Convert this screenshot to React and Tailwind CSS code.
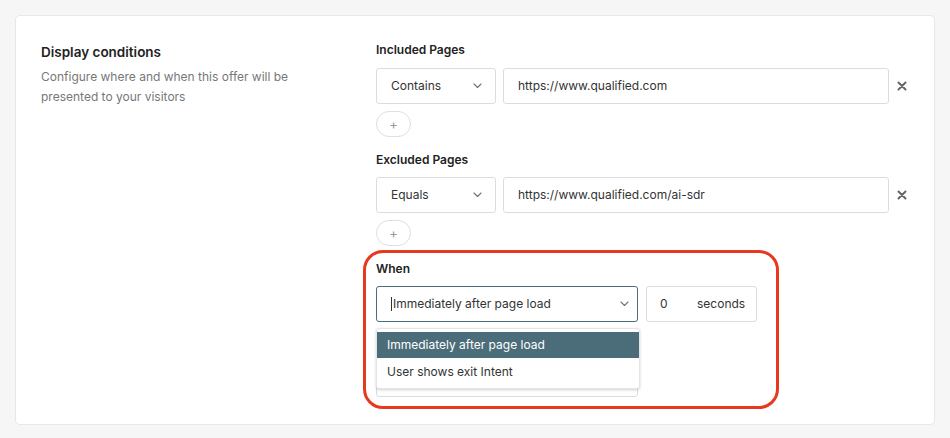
import React from 'react';

const Chevron = () => (
  <svg width="9" height="6" viewBox="0 0 9 6" fill="none" className="text-gray-500">
    <path d="M1 1l3.5 3.5L8 1" stroke="currentColor" strokeWidth="1.1" strokeLinecap="round" strokeLinejoin="round" />
  </svg>
);

const Cross = () => (
  <svg width="10" height="10" viewBox="0 0 10 10" className="text-[#666]">
    <path d="M1.5 1.5l7 7M8.5 1.5l-7 7" stroke="currentColor" strokeWidth="2" strokeLinecap="round" />
  </svg>
);

const Select = ({ value, className = '' }) => (
  <div className={`h-9 flex items-center justify-between pl-[14px] pr-[13px] bg-white border border-[#d9dde3] rounded-[3px] ${className}`}>
    <span>{value}</span>
    <Chevron />
  </div>
);

const PlusButton = () => (
  <button className="mt-[7px] w-[35px] h-[26px] rounded-full border border-[#dcdfe4] bg-white flex items-center justify-center text-[#999] text-[13px] leading-none">
    +
  </button>
);

const UrlRow = ({ op, url }) => (
  <div className="flex items-center">
    <Select value={op} className="w-[120px]" />
    <div className="ml-[7px] w-[386px] h-9 flex items-center px-[14px] bg-white border border-[#d9dde3] rounded-[3px]">
      {url}
    </div>
    <div className="w-[10px] flex justify-center ml-[8px]">
      <Cross />
    </div>
  </div>
);

export default function App() {
  return (
    <div className="min-h-[438px] bg-[#f6f6f7] p-[15px] font-['Inter',sans-serif] text-[12px] text-[#333]">
      <div className="bg-white border border-[#e5e7ea] rounded-[5px] flex pt-[26px] pb-[27px] pl-[25px]">
        <div className="w-[335px] shrink-0">
          <h2 className="text-[13.5px] leading-5 font-semibold text-[#222]">Display conditions</h2>
          <p className="mt-[5px] text-[12px] leading-5 text-[#777] w-[260px]">
            Configure where and when this offer will be presented to your visitors
          </p>
        </div>
        <div className="flex-1">
          <div className="text-[12px] leading-4 font-semibold text-[#222]">Included Pages</div>
          <div className="mt-[10px]">
            <UrlRow op="Contains" url="https://www.qualified.com" />
          </div>
          <PlusButton />
          <div className="mt-[15px] text-[12px] leading-4 font-semibold text-[#222]">Excluded Pages</div>
          <div className="mt-[9px]">
            <UrlRow op="Equals" url="https://www.qualified.com/ai-sdr" />
          </div>
          <PlusButton />

          <div className="relative">
            <div className="absolute -left-[13px] top-[4px] w-[416px] h-[159px] border-[3px] border-[#e63a1f] rounded-[20px] pointer-events-none z-20" />
            <div className="pt-[15px] text-[12px] leading-4 font-semibold text-[#222]">When</div>
            <div className="mt-[9px] flex items-center">
              <div className="w-[262px] h-9 flex items-center justify-between pl-[14px] pr-[8px] bg-white border border-[#4b6c79] rounded-[3px]">
                <span className="flex items-center">
                  <span className="w-px h-[14px] bg-[#333] mr-[1px]" />
                  Immediately after page load
                </span>
                <Chevron />
              </div>
              <div className="ml-[8px] w-[111px] h-9 flex items-center pl-[13px] bg-white border border-[#d9dde3] rounded-[3px]">
                <span className="w-[37px]">0</span>
                <span>seconds</span>
              </div>
            </div>
            <div className="relative mt-[39px] w-[262px] h-9 border border-[#d9dde3] rounded-[3px] bg-white">
              <div className="absolute -left-px -top-[34px] w-[264px] bg-white rounded-[3px] border border-[#e3e5e8] shadow-[0_1px_3px_rgba(0,0,0,0.18)] py-[3px] z-10">
                <div className="h-[26px] flex items-center px-[10px] bg-[#4b6c79] text-white">Immediately after page load</div>
                <div className="h-[27px] flex items-center px-[10px]">User shows exit Intent</div>
              </div>
            </div>
          </div>
        </div>
      </div>
    </div>
  );
}
